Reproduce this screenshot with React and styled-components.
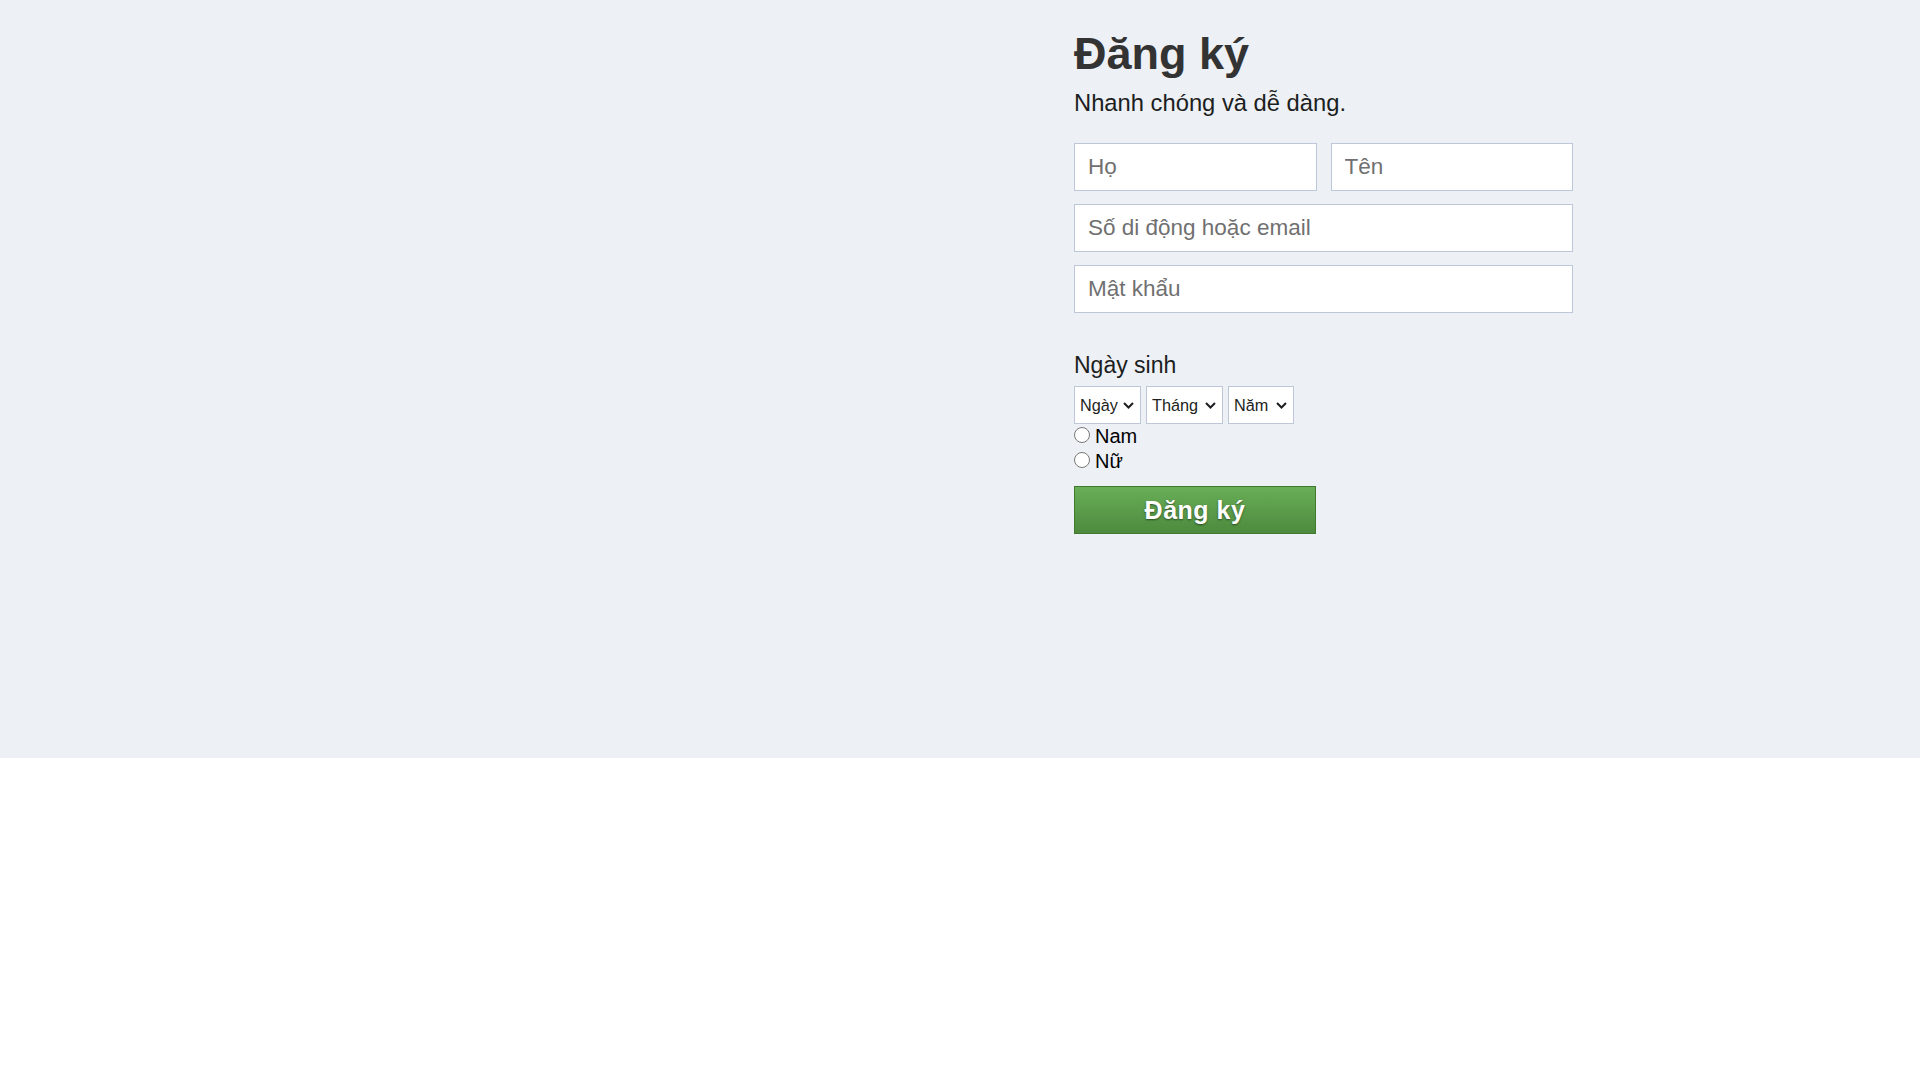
import styled, { createGlobalStyle } from "styled-components";

const GlobalStyle = createGlobalStyle`
  body {
    margin: 0;
    background: #ffffff;
    font-family: "Liberation Sans", Arial, sans-serif;
  }
`;

const Section = styled.div`
  background: #edf0f5;
  min-height: 758px;
  box-sizing: border-box;
`;

const Container = styled.div`
  width: 1226px;
  margin: 0 auto;
  display: grid;
  grid-template-columns: 727px 499px;
`;

const Aside = styled.div``;

const Form = styled.form`
  display: flex;
  flex-direction: column;
  padding-top: 28px;
`;

const Title = styled.h1`
  margin: 0;
  font-size: 45px;
  line-height: 52px;
  font-weight: bold;
  color: #333333;
`;

const Subtitle = styled.p`
  margin: 9px 0 0;
  font-size: 23.75px;
  line-height: 28px;
  color: #1c1e21;
`;

const Fields = styled.div`
  display: flex;
  flex-direction: column;
  gap: 13px;
  margin-top: 26px;
`;

const NameRow = styled.div`
  display: grid;
  grid-template-columns: 1fr 1fr;
  gap: 14px;
`;

const Input = styled.input`
  box-sizing: border-box;
  width: 100%;
  height: 48px;
  padding: 0 13px;
  border: 1px solid #bdc7d8;
  border-radius: 0;
  background: #ffffff;
  font-family: "Liberation Sans", Arial, sans-serif;
  font-size: 22.5px;
  color: #1c1e21;
  outline: none;

  &::placeholder {
    color: #707070;
  }
`;

const Label = styled.div`
  margin-top: 39px;
  font-size: 23px;
  line-height: 27px;
  color: #1c1e21;
`;

const Selects = styled.div`
  display: flex;
  gap: 5px;
  margin-top: 7px;
`;

const SelectWrap = styled.div`
  position: relative;
  width: ${({ $w }) => $w}px;
  height: 38px;
`;

const Select = styled.select`
  appearance: none;
  box-sizing: border-box;
  width: 100%;
  height: 100%;
  padding: 0 18px 0 5px;
  border: 1px solid #bdc7d8;
  border-radius: 0;
  background: #ffffff;
  font-family: "Liberation Sans", Arial, sans-serif;
  font-size: 16.25px;
  color: #1c1e21;
  outline: none;
`;

const Chevron = styled.svg`
  position: absolute;
  right: 7px;
  top: 16px;
  pointer-events: none;
`;

const Genders = styled.div`
  display: flex;
  flex-direction: column;
`;

const RadioRow = styled.label`
  display: flex;
  align-items: center;
  height: 25px;
  font-size: 20px;
  color: #000000;
`;

const Radio = styled.input`
  width: 16px;
  height: 16px;
  margin: 0 5px 3px 0;
`;

const Submit = styled.button`
  width: 242px;
  height: 48px;
  margin-top: 12px;
  border: 1px solid #3f7a2e;
  background: linear-gradient(#69ae58, #4d8a3d);
  color: #ffffff;
  font-family: "Liberation Sans", Arial, sans-serif;
  font-size: 25px;
  font-weight: bold;
  letter-spacing: 0.5px;
  text-shadow: 0 1px 2px rgba(0, 0, 0, 0.5);
  cursor: pointer;
`;

const days = Array.from({ length: 31 }, (_, i) => i + 1);
const months = Array.from({ length: 12 }, (_, i) => i + 1);
const years = Array.from({ length: 60 }, (_, i) => 2024 - i);

const DateSelect = ({ width, label, options }) => (
  <SelectWrap $w={width}>
    <Select defaultValue="">
      <option value="">{label}</option>
      {options.map((o) => (
        <option key={o}>{o}</option>
      ))}
    </Select>
    <Chevron width="11" height="7" viewBox="0 0 11 7">
      <polyline
        points="1,1 5.5,5.5 10,1"
        fill="none"
        stroke="#1c1e21"
        strokeWidth="2"
      />
    </Chevron>
  </SelectWrap>
);

const App = () => {
  return (
    <>
      <GlobalStyle />
      <Section>
        <Container>
          <Aside />
          <Form onSubmit={(e) => e.preventDefault()}>
            <Title>Đăng ký</Title>
            <Subtitle>Nhanh chóng và dễ dàng.</Subtitle>
            <Fields>
              <NameRow>
                <Input placeholder="Họ" />
                <Input placeholder="Tên" />
              </NameRow>
              <Input placeholder="Số di động hoặc email" />
              <Input type="password" placeholder="Mật khẩu" />
            </Fields>
            <Label>Ngày sinh</Label>
            <Selects>
              <DateSelect width={67} label="Ngày" options={days} />
              <DateSelect width={77} label="Tháng" options={months} />
              <DateSelect width={66} label="Năm" options={years} />
            </Selects>
            <Genders>
              <RadioRow>
                <Radio type="radio" name="gender" />
                Nam
              </RadioRow>
              <RadioRow>
                <Radio type="radio" name="gender" />
                Nữ
              </RadioRow>
            </Genders>
            <Submit type="submit">Đăng ký</Submit>
          </Form>
        </Container>
      </Section>
    </>
  );
};

export default App;
